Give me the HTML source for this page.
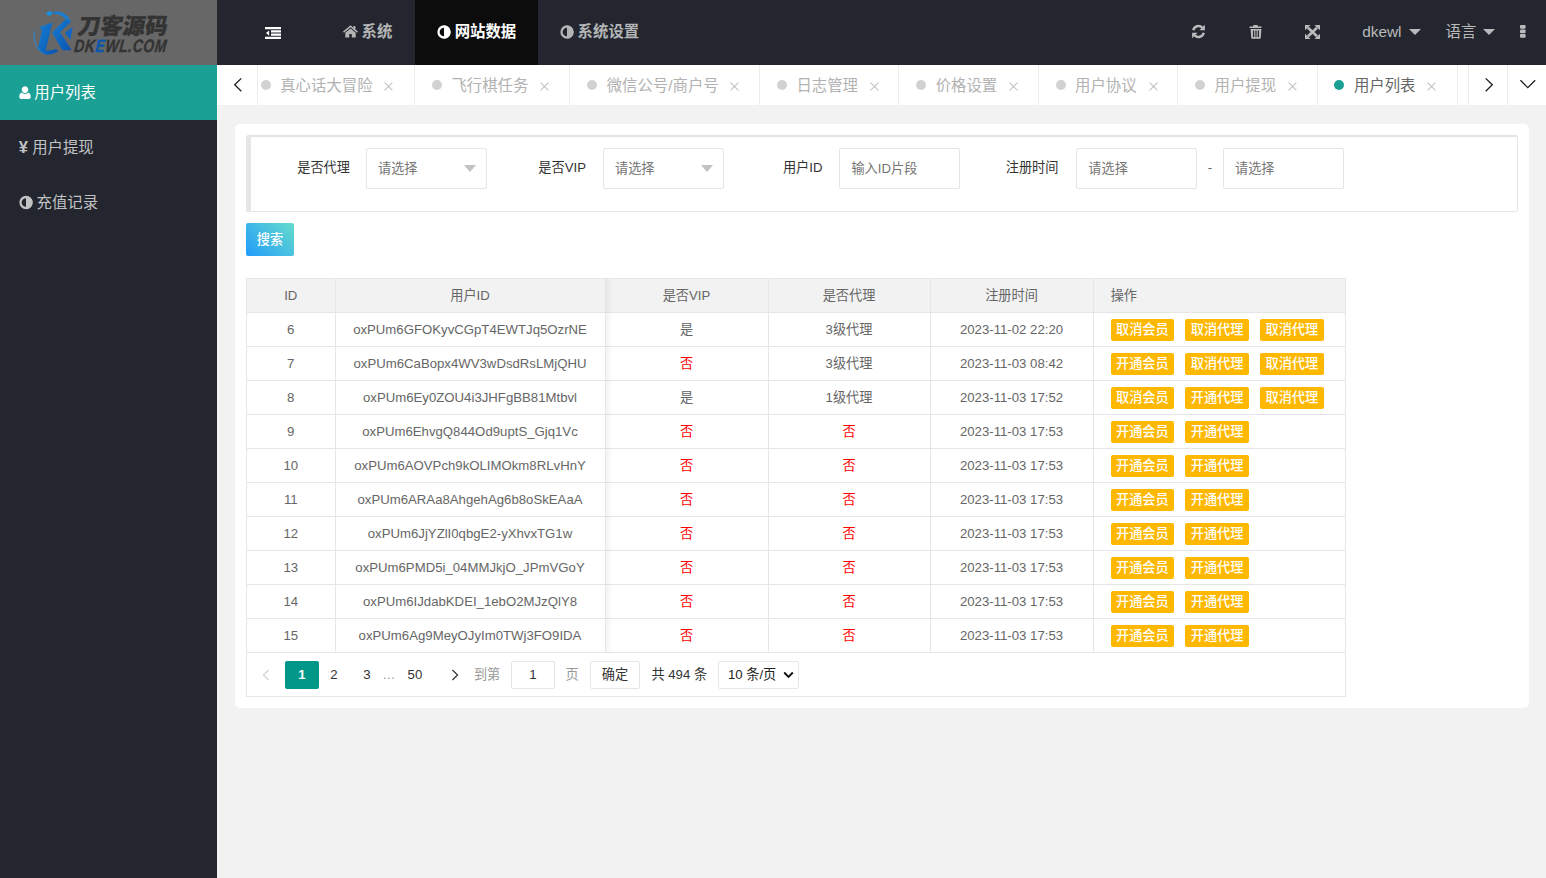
<!DOCTYPE html>
<html lang="zh-CN">
<head>
<meta charset="utf-8">
<title>用户列表</title>
<style>
*{box-sizing:border-box;margin:0;padding:0}
html,body{width:1546px;height:878px;overflow:hidden;background:#f2f2f2}
body{font-family:"Liberation Sans","Noto Sans CJK SC",sans-serif;font-size:15.4px;color:#666;position:relative}
a{text-decoration:none;color:inherit}
.abs{position:absolute}
/* logo */
#logo{position:absolute;left:0;top:0;width:217px;height:65px;background:#676767;overflow:hidden}
/* sidebar */
#side{position:absolute;left:0;top:65px;width:217px;height:813px;background:#23262e}
#side .it{position:relative;height:55px;line-height:55px;color:#c1c2c4;font-size:15.4px;white-space:nowrap}
#side .it.on{background:#1aa094;color:#fff}
#side .it svg{position:absolute;top:0}
#side .it span{position:absolute;top:0}
/* header */
#hdr{position:absolute;left:217px;top:0;width:1329px;height:65px;background:#23262e}
#hdr .nav{position:absolute;top:0;height:65px;line-height:64px;color:#b3b4b6;font-weight:bold;font-size:15.4px;white-space:nowrap}
#hdr .nav.on{background:#0c0c0c;color:#fff}
#hdr .nav svg{position:absolute}
#hdr .nav span{position:absolute;top:0}
#hdr .r{position:absolute;top:0;height:65px;line-height:64px;color:#b9babc;font-size:15.4px;white-space:nowrap}
.caret{position:absolute;width:0;height:0;border:6.2px solid transparent;border-top-color:#b9babc;border-bottom-width:0}
/* tabs */
#tabs{position:absolute;left:217px;top:65px;width:1329px;height:40px;background:#fff;overflow:hidden}
#tabs .tab{position:absolute;top:0;height:40px;line-height:41px;border-right:1px solid #ececec;color:#b2b2b2;font-size:15.4px;white-space:nowrap}
#tabs .tab i{position:absolute;top:15px;width:10px;height:10px;border-radius:50%;background:#d2d2d2}
#tabs .tab.on{color:#666}
#tabs .tab.on i{background:#1aa094}
#tabs .tab span{position:absolute;top:0}
#tabs .tab svg{position:absolute;top:16.500px}
#tabs .ctl{position:absolute;top:0;height:40px;background:#fff}
/* card */
#card{position:absolute;left:235px;top:124px;width:1294px;height:584px;background:#fff;border-radius:5px}
#flt{position:absolute;left:246px;top:135px;width:1272px;height:77px;border:1px solid #e6e6e6;border-left:5px solid #e6e6e6;border-top:2px solid #e4e4e4;background:#fff;border-radius:2px}
.lbl{position:absolute;top:148px;height:41px;line-height:39px;font-size:13.2px;color:#333;text-align:right;white-space:nowrap}
.inp{position:absolute;top:148px;width:121px;height:41px;border:1px solid #e6e6e6;border-radius:2px;background:#fff;line-height:39px;font-size:13.2px;color:#757575;padding-left:11px;white-space:nowrap}
.inp b{position:absolute;right:10px;top:16px;width:0;height:0;border:6px solid transparent;border-top:7px solid #c2c2c2;border-bottom-width:0}
#sbtn{position:absolute;left:246px;top:223px;width:48px;height:33px;line-height:34px;border-radius:2px;background:linear-gradient(45deg,#229cfc 0%,#66dccb 100%);color:#fff;font-size:13.2px;text-align:center;font-weight:500}
/* table */
#tbl{position:absolute;left:246px;top:278px;border-collapse:separate;border-spacing:0;table-layout:fixed;font-size:13.2px;color:#666;border-top:1px solid #e6e6e6;border-left:1px solid #e6e6e6}
#tbl th,#tbl td{border-right:1px solid #e6e6e6;border-bottom:1px solid #e6e6e6;text-align:center;font-weight:normal;white-space:nowrap;padding:0 0 2.6px 0;overflow:hidden;vertical-align:middle}
#tbl th{background:#f2f2f2;height:34px}
#tbl td{height:34px;background:#fff}
#tbl .op{text-align:left;padding-left:16px}
#tbl .no{color:#ff0000}
#tbl td:nth-child(1),#tbl td:nth-child(2),#tbl td:nth-child(5),#tbl th:nth-child(1){padding-bottom:0.4px}
.bt{display:inline-block;height:22px;line-height:22px;padding:0;width:63.3px;text-align:center;font-weight:500;background:#ffb800;color:#fff;border-radius:2px;font-size:13.2px;margin-right:10.8px;vertical-align:middle;position:relative;top:1.8px}
.bt+.bt{width:64.6px}
.bt+.bt+.bt{margin-left:-0.6px}
#tbl .op{padding-left:17.2px}
#shadow{position:absolute;left:606px;top:279px;width:7px;height:374px;background:linear-gradient(90deg,rgba(0,0,0,.045),rgba(0,0,0,0));pointer-events:none}
/* pager */
#pg{position:absolute;left:246px;top:653px;width:1100px;height:44px;border:1px solid #e6e6e6;border-top:none;background:#fff;font-size:13.2px;color:#333}
#pg .p{position:absolute;top:8px;height:28px;line-height:28px;text-align:center;white-space:nowrap}
#pg .box{border:1px solid #e6e6e6;border-radius:2px;line-height:26px;background:#fff}
</style>
</head>
<body>

<div id="logo">
<svg width="217" height="65" viewBox="0 0 217 65">
  <defs>
    <linearGradient id="lg1" x1="0" y1="0" x2="1" y2="1"><stop offset="0" stop-color="#167ed2"/><stop offset="1" stop-color="#0a54b0"/></linearGradient>
  </defs>
  <path d="M39.700 26.900L52.600 22.300L49.800 33L45.800 50.300Q51 50.800 56.300 49L58.100 51.500Q52 55.200 45.800 54.600Q41 53.500 38 48.500L41.800 30.600Z" fill="url(#lg1)"/>
  <path d="M52 32.400L65.800 18.900L71 21.700L60 32.200L71.700 50.300L62.400 50.300Z" fill="url(#lg1)"/>
  <path d="M51.500 11.900Q62 10.300 68.200 16.800L71 21.700L65.800 18.900Q60 13.600 51.500 13.300Z" fill="#1a7fd4"/>
  <path d="M64.900 33.100L72.600 26.900L70.400 39.800Z" fill="#0f66c2"/>
  <path d="M45.800 13.300L49.200 10.900L52.300 12.500L50.800 16.100L47.700 15.200Z" fill="#1b90e0"/>
  <path d="M33.800 31Q32.500 41 37 48Q41 53.500 45.800 54.600Q40 52 36.800 46Q34 40 34.600 31Z" fill="#2a8bdb"/>
  <text x="0" y="0" transform="translate(77,34.300) skewX(-9) scale(1.005,1.000)" style="font-family:'Noto Sans CJK SC',sans-serif;font-weight:900;font-size:22.300px" fill="#333" stroke="#333" stroke-width="0.300">刀客源码</text>
  <text x="0" y="0" transform="translate(73.800,52.100) skewX(-6) scale(0.830,1.070)" style="font-family:'Liberation Sans',sans-serif;font-weight:700;font-style:italic;font-size:16.800px;letter-spacing:0.700px" fill="#333" stroke="#333" stroke-width="0.350">DK<tspan fill="#0a58ac" stroke="#0a58ac">E</tspan>WL.COM</text>
</svg>
</div>

<div id="side">
  <div class="it on">
    <svg style="left:18.500px" width="12" height="55" viewBox="0 0 12 55"><path d="M6 21.2c1.9 0 3.3 1.5 3.3 3.4S7.9 28.2 6 28.2 2.7 26.5 2.7 24.6 4.100 21.2 6 21.2zM2.600 27.6c.9.900 2.100 1.400 3.400 1.400s2.500-.5 3.400-1.400c1.600.6 2.300 2.200 2.300 4.400 0 1.300-.9 2-2 2H2.300c-1.100 0-2-.7-2-2 0-2.200.700-3.800 2.300-4.400z" fill="#fff"/></svg>
    <span style="left:34.300px">用户列表</span>
  </div>
  <div class="it">
    <span style="left:18.700px;font-weight:bold;font-size:16.500px;font-family:'Liberation Sans',sans-serif">¥</span>
    <span style="left:32.200px">用户提现</span>
  </div>
  <div class="it">
    <svg style="left:18.500px" width="15" height="55" viewBox="0 0 15 55"><circle cx="7" cy="27.500" r="5.500" fill="none" stroke="#c1c2c4" stroke-width="2.300"/><path d="M7 20.900a6.600 6.600 0 0 1 0 13.200z" fill="#c1c2c4"/></svg>
    <span style="left:36.500px">充值记录</span>
  </div>
</div>

<div id="hdr">
  <!-- flexible icon -->
  <svg class="abs" style="left:48px;top:26.800px" width="16" height="12" viewBox="0 0 16.500 12.700" preserveAspectRatio="none"><path d="M0 0h16.500v2.400H0zM6.200 3.500h10.300v2.300H6.200zM6.200 6.900h10.300v2.300H6.200zM0 10.300h16.500v2.400H0zM4.300 3.600v5.600L1 6.400z" fill="#fff"/></svg>

  <div class="nav" style="left:104px;width:94px">
    <svg style="left:21.500px;top:24.800px" width="15" height="13" viewBox="0 0 15 13"><path d="M7.500 0.200L0 6.600l1 1.100L7.500 2.300 14 7.700l1-1.100-2.600-2.200V1h-2v1.700z" fill="#b3b4b6"/><path d="M7.500 3.400L2.300 7.800v4.800h3.900V9h2.600v3.600h3.900V7.800z" fill="#b3b4b6"/></svg>
    <span style="left:40.500px">系统</span>
  </div>
  <div class="nav on" style="left:198px;width:123px">
    <svg style="left:21.500px;top:24.500px" width="15" height="15" viewBox="0 0 15 15"><circle cx="7" cy="7" r="5.500" fill="none" stroke="#fff" stroke-width="2.300"/><path d="M7 .4a6.600 6.600 0 0 1 0 13.200z" fill="#fff"/></svg>
    <span style="left:39.700px">网站数据</span>
  </div>
  <div class="nav" style="left:321px;width:122px">
    <svg style="left:21.500px;top:24.500px" width="15" height="15" viewBox="0 0 15 15"><circle cx="7" cy="7" r="5.500" fill="none" stroke="#b3b4b6" stroke-width="2.300"/><path d="M7 .4a6.600 6.600 0 0 1 0 13.200z" fill="#b3b4b6"/></svg>
    <span style="left:39.600px">系统设置</span>
  </div>

  <!-- right icons -->
  <svg class="abs" style="left:974px;top:24px" width="15" height="15" viewBox="0 0 15 15"><g fill="none" stroke="#b9babc" stroke-width="2.500"><path d="M2.300 6.300A5.300 5.300 0 0 1 11.300 3.700"/><path d="M12.700 8.700A5.300 5.300 0 0 1 3.700 11.300"/></g><path d="M13.900 0.800v5.500H8.400zM1.100 14.200V8.700h5.500z" fill="#b9babc"/></svg>
  <svg class="abs" style="left:1032px;top:24.500px" width="14" height="14" viewBox="0 0 14 14"><path d="M4.700 0h3.600l.9 1.500h3.300v1.400H.5V1.500h3.300zM1.600 3.900h10.800l-.6 8.600c0 .8-.6 1.300-1.300 1.300h-7c-.7 0-1.300-.5-1.300-1.300zM4 5.600v6.300h1.200V5.600zM6.400 5.600v6.300h1.200V5.600zM8.800 5.600v6.300H10V5.600z" fill="#b9babc" fill-rule="evenodd"/></svg>
  <svg class="abs" style="left:1087.500px;top:24.500px" width="15" height="14" viewBox="0 0 15 14"><path d="M3 2.800L12 11.200M12 2.800L3 11.200" stroke="#b9babc" stroke-width="2.700" fill="none"/><path d="M0 0h5.600L0 5.300zM15 0H9.400L15 5.300zM0 14h5.600L0 8.700zM15 14H9.400L15 8.700z" fill="#b9babc"/></svg>

  <div class="r" style="left:1145.200px">dkewl</div><i class="caret" style="left:1192.300px;top:28.800px"></i>
  <div class="r" style="left:1228.600px">语言</div><i class="caret" style="left:1266.300px;top:28.800px"></i>
  <svg class="abs" style="left:1302.500px;top:24.500px" width="6" height="13" viewBox="0 0 6 13"><rect x="0" y="0" width="5.600" height="3.700" rx="1" fill="#b9babc"/><rect x="0" y="4.500" width="5.600" height="3.700" rx="1" fill="#b9babc"/><rect x="0" y="9" width="5.600" height="3.700" rx="1" fill="#b9babc"/></svg>
</div>

<div id="tabs">
<div class="tab" style="left:26.0px;width:172.2px"><i style="left:17.8px"></i><span style="left:37.2px">真心话大冒险</span><svg style="left:141.0px" width="9" height="9" viewBox="0 0 9 9"><path d="M0.600 0.600l7.800 7.800M8.400 0.600L0.600 8.400" stroke="#c2c2c2" stroke-width="1.100" fill="none"/></svg></div>
<div class="tab" style="left:197.2px;width:156.3px"><i style="left:17.8px"></i><span style="left:37.2px">飞行棋任务</span><svg style="left:125.8px" width="9" height="9" viewBox="0 0 9 9"><path d="M0.600 0.600l7.800 7.800M8.400 0.600L0.600 8.400" stroke="#c2c2c2" stroke-width="1.100" fill="none"/></svg></div>
<div class="tab" style="left:352.5px;width:190.7px"><i style="left:17.8px"></i><span style="left:37.2px">微信公号/商户号</span><svg style="left:160.4px" width="9" height="9" viewBox="0 0 9 9"><path d="M0.600 0.600l7.800 7.800M8.400 0.600L0.600 8.400" stroke="#c2c2c2" stroke-width="1.100" fill="none"/></svg></div>
<div class="tab" style="left:542.2px;width:140.3px"><i style="left:17.8px"></i><span style="left:37.2px">日志管理</span><svg style="left:110.7px" width="9" height="9" viewBox="0 0 9 9"><path d="M0.600 0.600l7.800 7.800M8.400 0.600L0.600 8.400" stroke="#c2c2c2" stroke-width="1.100" fill="none"/></svg></div>
<div class="tab" style="left:681.5px;width:140.4px"><i style="left:17.8px"></i><span style="left:37.2px">价格设置</span><svg style="left:110.7px" width="9" height="9" viewBox="0 0 9 9"><path d="M0.600 0.600l7.800 7.800M8.400 0.600L0.600 8.400" stroke="#c2c2c2" stroke-width="1.100" fill="none"/></svg></div>
<div class="tab" style="left:820.9px;width:140.4px"><i style="left:17.8px"></i><span style="left:37.2px">用户协议</span><svg style="left:110.7px" width="9" height="9" viewBox="0 0 9 9"><path d="M0.600 0.600l7.800 7.800M8.400 0.600L0.600 8.400" stroke="#c2c2c2" stroke-width="1.100" fill="none"/></svg></div>
<div class="tab" style="left:960.3px;width:140.4px"><i style="left:17.8px"></i><span style="left:37.2px">用户提现</span><svg style="left:110.7px" width="9" height="9" viewBox="0 0 9 9"><path d="M0.600 0.600l7.800 7.800M8.400 0.600L0.600 8.400" stroke="#c2c2c2" stroke-width="1.100" fill="none"/></svg></div>
<div class="tab on" style="left:1099.7px;width:141.0px"><i style="left:17.8px"></i><span style="left:37.2px">用户列表</span><svg style="left:110.7px" width="9" height="9" viewBox="0 0 9 9"><path d="M0.600 0.600l7.800 7.800M8.400 0.600L0.600 8.400" stroke="#c2c2c2" stroke-width="1.100" fill="none"/></svg></div>
<div class="ctl" style="left:0;width:40.500px;border-right:1px solid #ececec"><svg class="abs" style="left:16px;top:12px" width="10" height="16" viewBox="0 0 10 16"><path d="M8.300 1.400L1.700 7.800 8.300 14.200" stroke="#1c1c1c" stroke-width="1.300" fill="none"/></svg></div>
<div class="ctl" style="left:1240.500px;width:11.500px;border-right:1px solid #ececec"></div>
<div class="ctl" style="left:1252px;width:38.500px;border-right:1px solid #ececec"><svg class="abs" style="left:15px;top:12px" width="10" height="16" viewBox="0 0 10 16"><path d="M1.700 1.400L8.300 7.800 1.700 14.200" stroke="#1c1c1c" stroke-width="1.300" fill="none"/></svg></div>
<div class="ctl" style="left:1290.500px;width:38.500px"><svg class="abs" style="left:11px;top:14px" width="18" height="11" viewBox="0 0 18 11"><path d="M1.400 1.300L8.800 8.700 16.200 1.300" stroke="#1c1c1c" stroke-width="1.300" fill="none"/></svg></div>
</div>

<div id="card"></div>
<div id="flt"></div>
<div class="lbl" style="left:250px;width:100px">是否代理</div><div class="inp" style="left:366px">请选择<b></b></div>
<div class="lbl" style="left:486px;width:100px">是否VIP</div><div class="inp" style="left:603px">请选择<b></b></div>
<div class="lbl" style="left:722.500px;width:100px">用户ID</div><div class="inp" style="left:839.400px">输入ID片段</div>
<div class="lbl" style="left:958.500px;width:100px">注册时间</div><div class="inp" style="left:1076.300px">请选择</div>
<div class="lbl" style="left:1199px;width:22px;text-align:center;color:#666">-</div><div class="inp" style="left:1223px">请选择</div>
<div id="sbtn">搜索</div>
<table id="tbl"><colgroup><col style="width:88.500px"><col style="width:270px"><col style="width:163px"><col style="width:162px"><col style="width:163px"><col style="width:252px"></colgroup>
<thead><tr><th>ID</th><th>用户ID</th><th>是否VIP</th><th>是否代理</th><th>注册时间</th><th class="op">操作</th></tr></thead><tbody>
<tr><td>6</td><td>oxPUm6GFOKyvCGpT4EWTJq5OzrNE</td><td>是</td><td>3级代理</td><td>2023-11-02 22:20</td><td class="op"><a class="bt">取消会员</a><a class="bt">取消代理</a><a class="bt">取消代理</a></td></tr>
<tr><td>7</td><td>oxPUm6CaBopx4WV3wDsdRsLMjQHU</td><td><span class="no">否</span></td><td>3级代理</td><td>2023-11-03 08:42</td><td class="op"><a class="bt">开通会员</a><a class="bt">取消代理</a><a class="bt">取消代理</a></td></tr>
<tr><td>8</td><td>oxPUm6Ey0ZOU4i3JHFgBB81Mtbvl</td><td>是</td><td>1级代理</td><td>2023-11-03 17:52</td><td class="op"><a class="bt">取消会员</a><a class="bt">开通代理</a><a class="bt">取消代理</a></td></tr>
<tr><td>9</td><td>oxPUm6EhvgQ844Od9uptS_Gjq1Vc</td><td><span class="no">否</span></td><td><span class="no">否</span></td><td>2023-11-03 17:53</td><td class="op"><a class="bt">开通会员</a><a class="bt">开通代理</a></td></tr>
<tr><td>10</td><td>oxPUm6AOVPch9kOLIMOkm8RLvHnY</td><td><span class="no">否</span></td><td><span class="no">否</span></td><td>2023-11-03 17:53</td><td class="op"><a class="bt">开通会员</a><a class="bt">开通代理</a></td></tr>
<tr><td>11</td><td>oxPUm6ARAa8AhgehAg6b8oSkEAaA</td><td><span class="no">否</span></td><td><span class="no">否</span></td><td>2023-11-03 17:53</td><td class="op"><a class="bt">开通会员</a><a class="bt">开通代理</a></td></tr>
<tr><td>12</td><td>oxPUm6JjYZlI0qbgE2-yXhvxTG1w</td><td><span class="no">否</span></td><td><span class="no">否</span></td><td>2023-11-03 17:53</td><td class="op"><a class="bt">开通会员</a><a class="bt">开通代理</a></td></tr>
<tr><td>13</td><td>oxPUm6PMD5i_04MMJkjO_JPmVGoY</td><td><span class="no">否</span></td><td><span class="no">否</span></td><td>2023-11-03 17:53</td><td class="op"><a class="bt">开通会员</a><a class="bt">开通代理</a></td></tr>
<tr><td>14</td><td>oxPUm6IJdabKDEI_1ebO2MJzQlY8</td><td><span class="no">否</span></td><td><span class="no">否</span></td><td>2023-11-03 17:53</td><td class="op"><a class="bt">开通会员</a><a class="bt">开通代理</a></td></tr>
<tr><td>15</td><td>oxPUm6Ag9MeyOJyIm0TWj3FO9IDA</td><td><span class="no">否</span></td><td><span class="no">否</span></td><td>2023-11-03 17:53</td><td class="op"><a class="bt">开通会员</a><a class="bt">开通代理</a></td></tr>
</tbody></table>
<div id="shadow"></div>
<div id="pg">
<svg class="abs" style="left:14.9px;top:16px" width="8" height="12" viewBox="0 0 8 12"><path d="M6.600 1L1.400 6 6.600 11" stroke="#d2d2d2" stroke-width="1.200" fill="none"/></svg>
<div class="p" style="left:37.9px;width:34px;background:#009688;color:#fff;border-radius:2px;font-weight:bold">1</div>
<div class="p" style="left:70.9px;width:32px">2</div>
<div class="p" style="left:103.9px;width:32px">3</div>
<div class="p" style="left:126.9px;width:30px;color:#999">…</div>
<div class="p" style="left:151.9px;width:32px">50</div>
<svg class="abs" style="left:203.9px;top:16px" width="8" height="12" viewBox="0 0 8 12"><path d="M1.400 1L6.600 6 1.400 11" stroke="#333" stroke-width="1.200" fill="none"/></svg>
<div class="p" style="left:226.9px;color:#999">到第</div>
<div class="p box" style="left:263.9px;width:44px;color:#333">1</div>
<div class="p" style="left:318.4px;color:#999">页</div>
<div class="p box" style="left:342.9px;width:50px;color:#333">确定</div>
<div class="p" style="left:404.4px;color:#333">共 494 条</div>
<div class="p box" style="left:470.9px;width:81px;text-align:left;padding-left:9px;color:#222">10 条/页<svg class="abs" style="left:64px;top:9px" width="11" height="8" viewBox="0 0 11 8"><path d="M1.200 1.500L5.500 5.800 9.800 1.500" stroke="#111" stroke-width="1.900" fill="none"/></svg></div>
</div>


</body>
</html>
